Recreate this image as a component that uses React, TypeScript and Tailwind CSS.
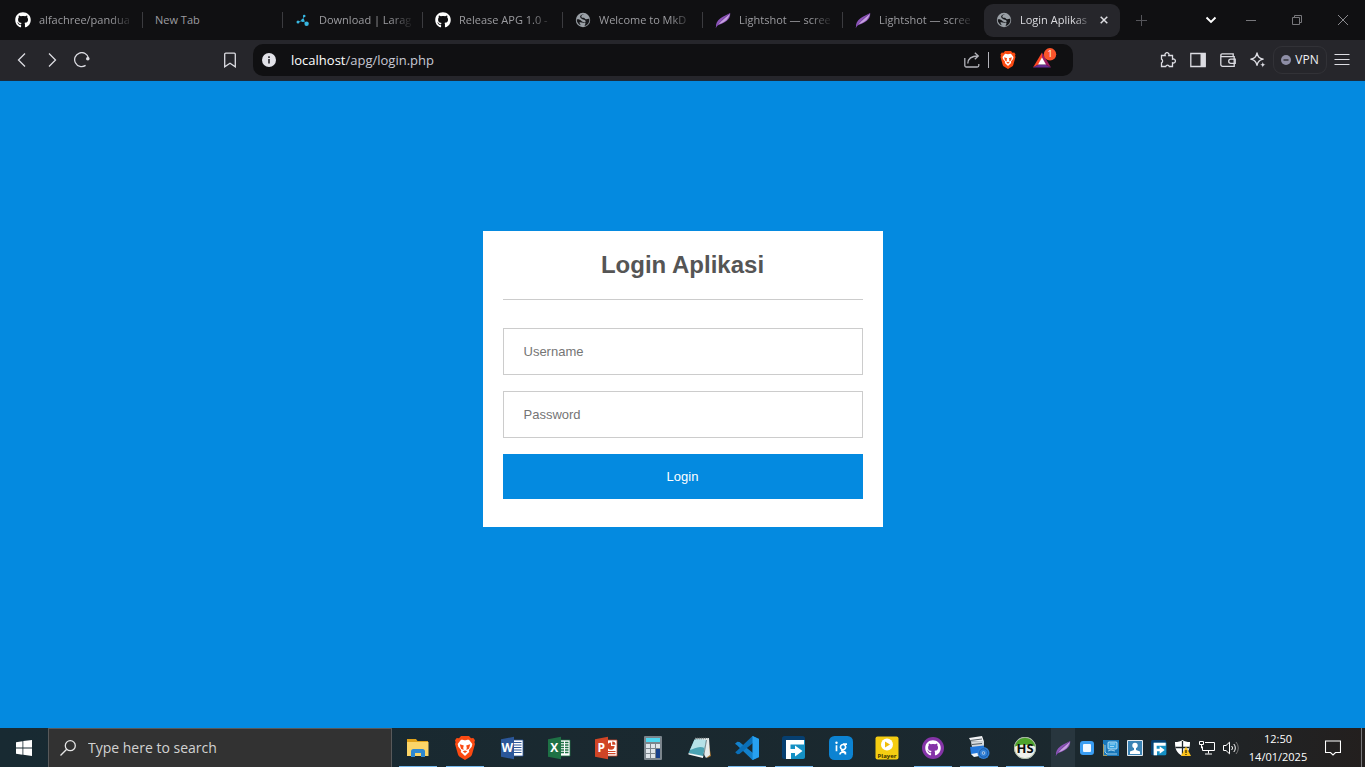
import React from "react";
import { FaGithub } from "react-icons/fa";

type IconProps = { className?: string };

/* ---------- Favicons ---------- */

function Feather({ className }: IconProps) {
  return (
    <svg viewBox="0 0 16 16" className={className} aria-hidden="true">
      <path d="M1 15.500C.5 12 2 9 5.500 6.300 8.500 4 12 3 15.200 1c.2 3-.8 5.500-3.400 7.700C9 11 5.500 12 2.500 13.500z" fill="#8d55ba" />
      <path d="M3 12.500c3-1 6-2 8.500-4.500 1.700-1.800 2.600-3.800 3.200-6.200C11 5.500 6.500 8.500 3 12.500z" fill="#c7a0e0" />
      <path d="M.8 15.500C4 10.500 9 6 15 1.200" stroke="#6b3c94" strokeWidth=".7" fill="none" />
    </svg>
  );
}

function Globe({ className }: IconProps) {
  return (
    <svg viewBox="0 0 16 16" className={className} aria-hidden="true">
      <circle cx="8" cy="8" r="7.200" fill="#9aa0a6" />
      <path
        d="M9.200 2.300C7.800 2.600 6.200 3.400 6.300 4.700c.1 1 1.300 1 2.300 1.100 1.200.2 1.200 1.300 2.400 1.400 1.300.1 2.300-.7 3.300-.3.500 3.500-1.900 6.500-4.700 7 .2-1.400 1.200-2 .7-3.200-.5-1-1.800-.5-2.800-1C6.300 9.100 5.800 7.700 4.200 7.400c-.9-.2-1.700 0-2.500 0 .1 2.800 1.700 4.800 4 5.900-.2-1.300-1.400-1.700-1.200-3C5.600 10 7 10.800 8.600 10.800c1.300 0 2.200-.8 2-1.900C10.200 7.600 8 7.900 7 7 6.200 6.200 5 5.800 5.100 4.500c.1-1.400 2.400-2.600 4.100-2.200z"
        fill="#17181b"
      />
    </svg>
  );
}

function Dots({ className }: IconProps) {
  return (
    <svg viewBox="0 0 16 16" className={className} aria-hidden="true">
      <path d="M3.500 9.800 7.800 8.400l1.200-5M7.800 8.400l3.400 2.800" stroke="#2b8fb3" strokeWidth=".9" fill="none" />
      <circle cx="3" cy="10" r="1.500" fill="#38b6e0" />
      <circle cx="7.800" cy="8.400" r="1.600" fill="#38b6e0" />
      <circle cx="9.200" cy="4" r="1.300" fill="#38b6e0" />
      <circle cx="11.600" cy="11.800" r="2.200" fill="#38b6e0" />
    </svg>
  );
}

function Brave({ className }: IconProps) {
  return (
    <svg viewBox="0 0 24 24" className={className} aria-hidden="true">
      <path d="M8 0h8l2 2.300 2.300-.4L22 4.300 21.400 6.200 22 8l-3 10.500c-.3 1-.8 1.700-1.600 2.200L12 24l-5.400-3.300C5.800 20.200 5.300 19.500 5 18.500L2 8l.6-1.800L2 4.300l1.700-2.400 2.300.4z" fill="#fb4a12" />
      <path d="M12 4.300c1.300 0 2.300-.7 4.200-.4L19.300 8l-.6 2.700-2.900 3.600.5 1.700-1.200 1L12 20l-3.100-3-1.200-1 .5-1.700-2.900-3.600L4.700 8l3.100-4.100c1.900-.3 2.900.4 4.200.4z" fill="#fff" />
      <path d="M6.800 8.300l4 1.200-.6 2.200.4 2.300-2.600-1.300-.5-1.700zM17.200 8.300l-4 1.200.6 2.200-.4 2.300 2.600-1.300.5-1.700zM9.700 15.300l2.300-.9 2.300.9-2.300 1.600z" fill="#fb4a12" />
    </svg>
  );
}

/* ---------- Tab strip ---------- */

const tabs = [
  { title: "alfachree/pandua", icon: <FaGithub className="size-4 shrink-0 text-white" /> },
  { title: "New Tab", icon: null },
  { title: "Download | Larag", icon: <Dots className="size-4 shrink-0" /> },
  { title: "Release APG 1.0 -", icon: <FaGithub className="size-4 shrink-0 text-white" /> },
  { title: "Welcome to MkD", icon: <Globe className="size-4 shrink-0" /> },
  { title: "Lightshot — scree", icon: <Feather className="size-4 shrink-0" /> },
  { title: "Lightshot — scree", icon: <Feather className="size-4 shrink-0" /> },
];

const fade = "[mask-image:linear-gradient(to_right,black_75%,transparent)]";

function TabStrip() {
  return (
    <div className="flex h-10 items-center bg-[#101012] pl-[3px] text-[11px] text-[#9c9ca0]">
      {tabs.map((t, i) => (
        <button
          key={i}
          type="button"
          className={`flex h-4 w-[140px] items-center gap-2 pr-2 pl-3 ${i < 6 ? "border-r border-[#3b3b3f]" : ""}`}
        >
          {t.icon}
          <span className={`min-w-0 flex-1 text-left leading-4 whitespace-nowrap ${t.icon ? fade : ""}`}>{t.title}</span>
        </button>
      ))}
      <div className="ml-px flex h-[33px] w-[136px] items-center rounded-[9px] bg-[#26262b] pr-2 pl-3 text-[#dcdce0]">
        <Globe className="size-4 shrink-0" />
        <span className={`ml-2 w-[72px] leading-4 whitespace-nowrap ${fade}`}>Login Aplikas</span>
        <button type="button" aria-label="Close tab" className="ml-auto flex size-4 items-center justify-center">
          <svg viewBox="0 0 8 8" className="size-2">
            <path d="M.7.7l6.600 6.600M7.300.7.7 7.300" stroke="#dedee2" strokeWidth="1.500" />
          </svg>
        </button>
      </div>
      <button type="button" aria-label="New tab" className="flex h-8 w-[42px] items-center justify-center">
        <svg viewBox="0 0 11 11" className="size-[11px]">
          <path d="M5.500 0v11M0 5.500h11" stroke="#55555a" />
        </svg>
      </button>
      <div className="ml-auto flex">
        <button type="button" aria-label="Search tabs" className="flex h-10 w-[34px] items-center justify-center">
          <svg viewBox="0 0 12 8" className="h-2 w-3">
            <path d="M1.500 1.500 6 6l4.500-4.500" stroke="#fff" strokeWidth="1.900" fill="none" />
          </svg>
        </button>
        <button type="button" aria-label="Minimize" className="flex h-10 w-[46px] items-center justify-center">
          <svg viewBox="0 0 10 10" className="size-2.5">
            <path d="M0 5.500h10" stroke="#77777b" />
          </svg>
        </button>
        <button type="button" aria-label="Restore" className="flex h-10 w-[46px] items-center justify-center">
          <svg viewBox="0 0 10 10" className="size-2.5">
            <path d="M.5 2.500h7v7h-7zM2.500 2.500v-2h7v7h-2" stroke="#77777b" fill="none" />
          </svg>
        </button>
        <button type="button" aria-label="Close" className="flex h-10 w-[45px] items-center justify-center">
          <svg viewBox="0 0 10 10" className="size-2.5">
            <path d="M0 0l10 10M10 0 0 10" stroke="#8a8a8e" />
          </svg>
        </button>
      </div>
    </div>
  );
}

/* ---------- Toolbar ---------- */

function ToolButton({ label, children }: { label: string; children: React.ReactNode }) {
  return (
    <button type="button" aria-label={label} className="flex h-8 w-[30px] shrink-0 items-center justify-center text-[#dcdce2]">
      <svg viewBox="0 0 16 16" className="size-4" fill="none" stroke="currentColor" strokeWidth="1.300">
        {children}
      </svg>
    </button>
  );
}

function Toolbar() {
  return (
    <div className="flex h-[41px] items-center border-b border-[#1b2c3c] bg-[#26262b]">
      <div className="flex w-[253px] shrink-0 items-center pr-2 pl-[7px]">
        <ToolButton label="Back">
          <path d="M11 1.500 4.500 8l6.500 6.500" />
        </ToolButton>
        <ToolButton label="Forward">
          <path d="M5 1.500 11.500 8 5 14.500" />
        </ToolButton>
        <ToolButton label="Reload">
          <path d="M11.600 13.400A7 7 0 1 1 14.500 6.200" />
          <circle cx="13.800" cy="6.800" r="1.800" fill="currentColor" stroke="none" />
        </ToolButton>
        <div className="ml-auto">
          <ToolButton label="Bookmark">
            <path d="M2.700 2.200a1 1 0 0 1 1-1h8.600a1 1 0 0 1 1 1v12.600L8 11.200l-5.300 3.600z" />
          </ToolButton>
        </div>
      </div>

      <div className="mr-20 flex h-8 min-w-0 flex-1 items-center rounded-[10px] bg-[#101012] pr-4 pl-[9px]">
        <svg viewBox="0 0 14 14" className="size-3.5 shrink-0" aria-hidden="true">
          <circle cx="7" cy="7" r="7" fill="#e2e2e8" />
          <path d="M6.100 6h1.800v4.500H6.100zM6.100 3.300h1.800V5H6.100z" fill="#3a3a40" />
        </svg>
        <div className="ml-[15px] flex-1 text-[13px] leading-5 text-[#c9cad4]">
          <span className="text-white">localhost</span>/apg/login.php
        </div>
        <button type="button" aria-label="Share" className="text-[#b4b4ba]">
          <svg viewBox="0 0 16 16" className="size-4" fill="none" stroke="currentColor" strokeWidth="1.300">
            <path d="M.8 6v7.500a1.500 1.500 0 0 0 1.500 1.500h11a1.500 1.500 0 0 0 1.500-1.500V12M3.800 11.500C4 7 7 4 14 4M10.800 .8 14.300 4l-3.500 3.300" />
          </svg>
        </button>
        <span className="mx-2 h-4 w-px bg-[#b4b4ba]" />
        <button type="button" aria-label="Shields" className="ml-0.5">
          <Brave className="size-[18px]" />
        </button>
        <button type="button" aria-label="Rewards" className="ml-4">
          <svg viewBox="0 0 24 24" className="size-6">
            <path d="M9 4.500 9 10.500 5.500 16.500 0 19.500z" fill="#ff4724" />
            <path d="M0 19.500 5.500 16.500h7l5.500 3z" fill="#662d91" />
            <path d="M9 4.500v6l3.500 6 5.500 3z" fill="#9e1f63" />
            <path d="M9 9.500 13 16.500H5z" fill="#fff" />
            <circle cx="17" cy="6.300" r="6.200" fill="#fb542b" />
            <text x="17" y="9.300" textAnchor="middle" fontSize="9" fill="#fff">1</text>
          </svg>
        </button>
      </div>

      <div className="flex shrink-0 items-center pr-2">
        <ToolButton label="Extensions">
          <path d="M2.500 3.500h2.700a2 2 0 1 1 3.600 0h3.700v3.700a2 2 0 1 1 0 3.600v3.700H9.300a1.900 1.900 0 0 0-3.600 0H1.500v-3.700a2 2 0 0 0 0-3.600V3.500z" />
        </ToolButton>
        <ToolButton label="Sidebar">
          <path d="M.8 1.500h14.400v13H.8z" />
          <path d="M10.500 1.500h5v13h-5z" fill="currentColor" stroke="none" />
        </ToolButton>
        <ToolButton label="Wallet">
          <path d="M.8 3.500v9A1.800 1.800 0 0 0 2.600 14.300h11.600V4.600H2.200a1.200 1.200 0 0 1 0-2.800h11V4.500" />
          <path d="M15.200 7.200h-4.400a2.100 2.100 0 0 0 0 4.200h4.400z" />
        </ToolButton>
        <ToolButton label="Leo AI">
          <path d="M7 1c.9 4 2.200 5.200 6.200 6.200-4 1-5.300 2.200-6.200 6.200-1-4-2.200-5.200-6.200-6.200C4.800 6.200 6 5 7 1z" strokeLinejoin="round" />
          <path d="M12.800 10c.4 1.900.9 2.400 2.800 2.800-1.900.4-2.400.9-2.800 2.800-.4-1.900-.9-2.400-2.800-2.800 1.900-.4 2.400-.9 2.800-2.800z" fill="currentColor" stroke="none" />
        </ToolButton>
        <button type="button" className="flex h-7 w-[54px] items-center justify-center gap-1 rounded-[9px] border border-[#323237] text-[12px] text-[#f0f0f4]">
          <svg viewBox="0 0 10 10" className="size-2.5" aria-hidden="true">
            <circle cx="5" cy="5" r="5" fill="#8e8ea6" />
            <path d="M2.500 5h5" stroke="#26262b" strokeWidth="1.300" />
          </svg>
          VPN
        </button>
        <ToolButton label="Menu">
          <path d="M.5 2.500h15M.5 7.500h15M.5 12.500h15" strokeWidth="1.200" />
        </ToolButton>
      </div>
    </div>
  );
}

/* ---------- Login page ---------- */

const fieldClass =
  "block h-[47px] w-full border border-[#ccc] px-5 text-[13px] text-[#333] outline-none placeholder:text-[#757575] placeholder:opacity-100";

function LoginPage() {
  return (
    <main className="flex-1 bg-[#048ae0] px-4 pt-[150px] font-['Liberation_Sans',Arial,sans-serif]">
      <section className="mx-auto w-full max-w-[400px] bg-white px-5 pt-5 pb-7">
        <h1 className="border-b border-[#ccc] pb-5 text-center text-2xl leading-7 font-bold text-[#555]">Login Aplikasi</h1>
        <form className="mt-7 flex flex-col gap-4" onSubmit={(e) => e.preventDefault()}>
          <input className={fieldClass} type="text" name="username" placeholder="Username" aria-label="Username" />
          <input className={fieldClass} type="password" name="password" placeholder="Password" aria-label="Password" />
          <button type="submit" className="h-[45px] w-full bg-[#048ae0] text-[13px] text-white">
            Login
          </button>
        </form>
      </section>
    </main>
  );
}

/* ---------- Taskbar ---------- */

function Office({ letter, main, kind }: { letter: string; main: string; kind: string }) {
  return (
    <svg viewBox="0 0 24 24" className="size-6" aria-hidden="true">
      <path d="M12 4h11v16H12z" fill="#fff" stroke={main} strokeWidth=".8" />
      {kind === "lines" && <path d="M14 6.500h7.500M14 9h7.500M14 11.500h7.500M14 14h7.500M14 16.500h7.500" stroke={main} strokeWidth="1.200" />}
      {kind === "grid" && <path d="M14 6.500h3M18 6.500h3.500M14 9h3M18 9h3.500M14 11.500h3M18 11.500h3.500M14 14h3M18 14h3.500M14 16.500h3M18 16.500h3.500" stroke={main} strokeWidth="1.500" />}
      {kind === "chart" && (
        <g>
          <path d="M17 6.500a3.600 3.600 0 1 0 3.600 3.600H17z" fill={main} />
          <path d="M18.200 5.500v3.300h3.300a3.300 3.300 0 0 0-3.300-3.300z" fill={main} />
          <path d="M14 15.500h7.500M14 17.700h7.500" stroke={main} strokeWidth="1.200" />
        </g>
      )}
      <path d="M1 3.200 14 .8v22.400L1 20.800z" fill={main} />
      <text x="7.300" y="16.300" textAnchor="middle" fontSize="12" fontWeight="700" fill="#fff">{letter}</text>
    </svg>
  );
}

function FileTransfer({ className }: IconProps) {
  return (
    <svg viewBox="0 0 24 24" className={className} aria-hidden="true">
      <rect x="0" y="0" width="23" height="23" rx="2.500" fill="#063f70" />
      <path d="M4 4h19v17a2 2 0 0 1-2 2H4z" fill="#1590c4" />
      <path d="M4 4h18v4.500H8.500V13H13V9.500l7.500 5.500-7.500 5.500V17H9v6H4z" fill="#fff" />
    </svg>
  );
}

const apps: { name: string; open?: boolean; icon: React.ReactNode }[] = [
  {
    name: "File Explorer",
    open: true,
    icon: (
      <svg viewBox="0 0 24 24" className="size-6">
        <path d="M1 3h9l1.500 2H22v15H1z" fill="#e0a21a" />
        <path d="M1 6h21.500v14H1z" fill="#fbd568" />
        <path d="M5 21v-5.500A2.500 2.500 0 0 1 7.500 13h9a2.500 2.500 0 0 1 2.500 2.500V21h-4v-4H9v4z" fill="#2f88d0" />
      </svg>
    ),
  },
  { name: "Brave", open: true, icon: <Brave className="size-6" /> },
  { name: "Word", icon: <Office letter="W" main="#2b579a" kind="lines" /> },
  { name: "Excel", icon: <Office letter="X" main="#1e7145" kind="grid" /> },
  { name: "PowerPoint", icon: <Office letter="P" main="#d04526" kind="chart" /> },
  {
    name: "Calculator",
    icon: (
      <svg viewBox="0 0 24 24" className="size-6">
        <rect x="3" y="0" width="18" height="24" rx="1" fill="#7b858c" />
        <path d="M5 2h14v4H5z" fill="#4fd6ef" />
        <path d="M5 8h4v4H5zM10 8h4v4h-4zM15 8h4v4h-4zM5 13h4v4H5zM10 13h4v4h-4zM5 18h4v4H5zM10 18h4v4h-4z" fill="#dfe5ea" />
        <path d="M15 13h4v9h-4z" fill="#17408b" />
      </svg>
    ),
  },
  {
    name: "Notepad",
    icon: (
      <svg viewBox="0 0 24 24" className="size-6">
        <path d="m20 3 3 17-4 2z" fill="#b07b34" />
        <path d="M7 2.500 21 2l1 17-4 3z" fill="#e6ecec" />
        <path d="M6.500 3.500 18 4l-3 17L.5 17z" fill="#4ba3b3" />
        <path d="M6.500 3.500 18 4l-1.500 8C11 9 6 13 2 14z" fill="#b5e2e8" />
        <path d="M.5 17 15 20v2L.5 18.500z" fill="#f4f8f8" />
        <path d="m18.500 4-3 17" stroke="#5f7478" strokeWidth=".8" />
        <path d="M7 2.500h12.500" stroke="#808b8e" strokeDasharray="1 1" strokeWidth="1.500" />
      </svg>
    ),
  },
  {
    name: "Visual Studio Code",
    open: true,
    icon: (
      <svg viewBox="0 0 24 24" className="size-6">
        <path d="M17.500 0 24 3v18l-6.500 3L2 9.200 0 7.700l2.300-2L4.500 6 18 17V7z" fill="#1381cc" />
        <path d="M17.500 24 24 21V3l-6.500-3L2 14.800.2 16.300l2.200 2 2-.3L18 7z" fill="#0a6fb8" />
        <path d="M17.500 0 24 3v18l-6.500 3z" fill="#27a0f0" />
      </svg>
    ),
  },
  { name: "File Transfer", open: true, icon: <FileTransfer className="size-6" /> },
  {
    name: "Instant Gaming",
    icon: (
      <svg viewBox="0 0 24 24" className="size-6">
        <rect width="24" height="24" rx="5.500" fill="#0c83d2" />
        <circle cx="7.500" cy="6.800" r="1.200" fill="#fff" />
        <path d="M7.500 9.200v6M18 8.200h-4.200M14 8.500a2.600 2.600 0 1 0 .1 0zM13 14c-1.500 1.500 4 .8 3.500 3.200M11 18.500c0-3 5.500-3 5.500 0" stroke="#fff" strokeWidth="1.700" fill="none" />
      </svg>
    ),
  },
  {
    name: "Player",
    icon: (
      <svg viewBox="0 0 24 24" className="size-6">
        <rect x=".5" y=".5" width="23" height="23" rx="2" fill="#f5cd12" />
        <circle cx="12" cy="8.500" r="6" fill="#fff" />
        <path d="m10 5.500 5 3-5 3z" fill="#f0bd0a" />
        <text x="12" y="21.500" textAnchor="middle" fontSize="6" fontWeight="700" fill="#3a3000">Player</text>
      </svg>
    ),
  },
  {
    name: "GitHub Desktop",
    open: true,
    icon: (
      <span className="flex size-[22px] items-center justify-center rounded-full bg-[#8534a8]">
        <FaGithub className="size-4 text-white" />
      </span>
    ),
  },
  {
    name: "Installer",
    open: true,
    icon: (
      <svg viewBox="0 0 24 24" className="size-6">
        <path d="M2 2 15 0l2 5.500H4z" fill="#f1f3f4" />
        <path d="M3 4.500 15 3M4.500 7.500 16 6" stroke="#555f66" />
        <path d="M4 5.500 17 5v6H5z" fill="#d5dade" />
        <path d="M5 8.500 15 7.500" stroke="#555f66" />
        <path d="M3 11 17 9.500V19L7 20.500 4 18z" fill="#2378dc" />
        <path d="m4 18 9-1.500 2 3L7 21z" fill="#f1f4f8" />
        <circle cx="16.500" cy="17" r="6" fill="#2f7fd6" />
        <circle cx="16.500" cy="17" r="4.200" fill="none" stroke="#1c5cab" />
        <circle cx="16.500" cy="17" r="1.800" fill="#a8ccf0" />
        <circle cx="16.500" cy="17" r=".8" fill="#1c4e91" />
      </svg>
    ),
  },
  {
    name: "HeidiSQL",
    open: true,
    icon: (
      <svg viewBox="0 0 24 24" className="size-6">
        <circle cx="12" cy="12" r="11" fill="#eef1ec" />
        <path d="M1.100 11a11 11 0 0 1 21.800 0c-4-3-17.800-3-21.800 0z" fill="#4da32c" />
        <circle cx="12" cy="12" r="10.600" fill="none" stroke="#9fb297" strokeWidth=".8" />
        <text x="12" y="16.800" textAnchor="middle" fontSize="13" fontWeight="700" fill="#0d0d0d">HS</text>
      </svg>
    ),
  },
];

const tray: { name: string; icon: React.ReactNode }[] = [
  { name: "Lightshot", icon: <Feather className="size-4" /> },
  {
    name: "Monitor",
    icon: (
      <svg viewBox="0 0 16 16" className="size-4">
        <rect x="1" y="1" width="14" height="14" rx="3" fill="#3a9df2" />
        <rect x="4" y="4" width="8" height="8" rx="1" fill="#f1f8ff" />
      </svg>
    ),
  },
  {
    name: "Graphics",
    icon: (
      <svg viewBox="0 0 16 16" className="size-4">
        <path d="M0 0h16v16H0z" fill="#1877ba" />
        <rect x="5" y="2" width="9" height="7" rx="1" fill="#3aa4e2" stroke="#d5effb" strokeWidth=".8" />
        <path d="M2 5v7l2 2h10M7 4h5M7 6.500h4M5 11l3-1 4 1" stroke="#bfe5f7" strokeWidth=".8" fill="none" />
        <path d="M.5 4v11.500H4" stroke="#c8a24a" strokeWidth=".8" fill="none" />
      </svg>
    ),
  },
  {
    name: "Account",
    icon: (
      <svg viewBox="0 0 16 16" className="size-4">
        <path d="M.5.5h15v15H.5z" fill="#3b83b4" stroke="#e4e9ed" />
        <circle cx="8" cy="5.500" r="2.700" fill="#fff" />
        <path d="M7 7.500h2v2.500l4 1.500V14H3v-2.500L7 10z" fill="#fff" />
      </svg>
    ),
  },
  { name: "File Transfer", icon: <FileTransfer className="size-4" /> },
  {
    name: "Security",
    icon: (
      <svg viewBox="0 0 16 16" className="size-4">
        <path d="M7.500 0C9.500 1.500 12 2 15 2c0 7-1.500 11-7.500 14C1.500 13 0 9 0 2c3 0 5.500-.5 7.500-2z" fill="#fff" />
        <path d="M7.500 1v14M.5 7.500h14" stroke="#1d2529" strokeWidth="1.300" />
        <path d="m11 6.500 5 9.500H6z" fill="#fcc21b" />
        <path d="M11 10v3M11 14v1" stroke="#2a2300" strokeWidth="1.200" />
      </svg>
    ),
  },
  {
    name: "Network",
    icon: (
      <svg viewBox="0 0 16 16" className="size-4" fill="none" stroke="#fff">
        <path d="M6 2.500h9.500v8H3.500v-4M9.500 10.500v3M6 14h7" />
        <path d="M.5 1.500h4v3h-4zM2.500 4.500v3.500h1" />
      </svg>
    ),
  },
  {
    name: "Volume",
    icon: (
      <svg viewBox="0 0 16 16" className="size-4" fill="none" stroke="#fff">
        <path d="M.5 5.500H3l3.500-3.300v11.600L3 10.500H.5z" />
        <path d="M8.700 6a3 3 0 0 1 0 4M10.800 4a6 6 0 0 1 0 8" />
        <path d="M13 2a9 9 0 0 1 0 12" stroke="#777" />
      </svg>
    ),
  },
];

function Taskbar() {
  return (
    <footer className="flex h-[39px] shrink-0 items-stretch bg-linear-to-r from-[#182a32] via-[#1b282e] via-80% to-[#231f1e]">
      <button type="button" aria-label="Start" className="flex w-12 shrink-0 items-center justify-center">
        <svg viewBox="0 0 16 16" className="size-4" fill="#fff">
          <path d="M0 2.200 6.500 1.200v6.300H0zM7.300 1.100 16 0v7.500H7.300zM0 8.400h6.500v6.400L0 13.800zM7.300 8.400H16V16l-8.700-1.200z" />
        </svg>
      </button>
      <label className="flex w-[344px] min-w-0 items-center gap-3 border border-b-0 border-[#58595a] bg-[#323232] px-[11px]">
        <svg viewBox="0 0 16 16" className="size-4 shrink-0" fill="none" stroke="#e6e6e6" strokeWidth="1.300" aria-hidden="true">
          <circle cx="10.300" cy="5.700" r="5" />
          <path d="M6.700 9.300.5 15.500" />
        </svg>
        <input
          type="text"
          aria-label="Search"
          placeholder="Type here to search"
          className="min-w-0 flex-1 bg-transparent text-sm text-white outline-none placeholder:text-[#d2d2d2] placeholder:opacity-100"
        />
      </label>
      <nav className="ml-0.5 flex">
        {apps.map((a, i) => (
          <button key={a.name} type="button" aria-label={a.name} className={`flex flex-col items-center ${i < 10 ? "w-[47px]" : "w-[46px]"}`}>
            <span className="flex flex-1 items-center pt-px">{a.icon}</span>
            <span className={`h-px w-[38px] ${a.open ? "bg-[#76b9ed]" : ""}`} />
          </button>
        ))}
      </nav>
      <div className="ml-auto flex">
        {tray.map((t, i) => (
          <button
            key={t.name}
            type="button"
            aria-label={t.name}
            className={`flex w-6 items-center justify-center ${i === 0 ? "bg-[#28363e]" : ""}`}
          >
            {t.icon}
          </button>
        ))}
        <div className="flex w-[70px] flex-col items-center justify-center text-[11px] leading-[18px] text-white">
          <time>12:50</time>
          <time>14/01/2025</time>
        </div>
        <button type="button" aria-label="Notifications" className="flex w-10 items-center justify-center">
          <svg viewBox="0 0 16 16" className="size-4" fill="none" stroke="#fff" strokeWidth="1.100">
            <path d="M.5 1h15v11.500h-5L8 15l-2.500-2.500h-5z" />
          </svg>
        </button>
        <span className="ml-2 w-1 border-l border-[#77777a]" />
      </div>
    </footer>
  );
}

export default function App() {
  return (
    <div className="flex min-h-screen flex-col font-['Open_Sans','Noto_Sans',sans-serif]">
      <TabStrip />
      <Toolbar />
      <LoginPage />
      <Taskbar />
    </div>
  );
}
